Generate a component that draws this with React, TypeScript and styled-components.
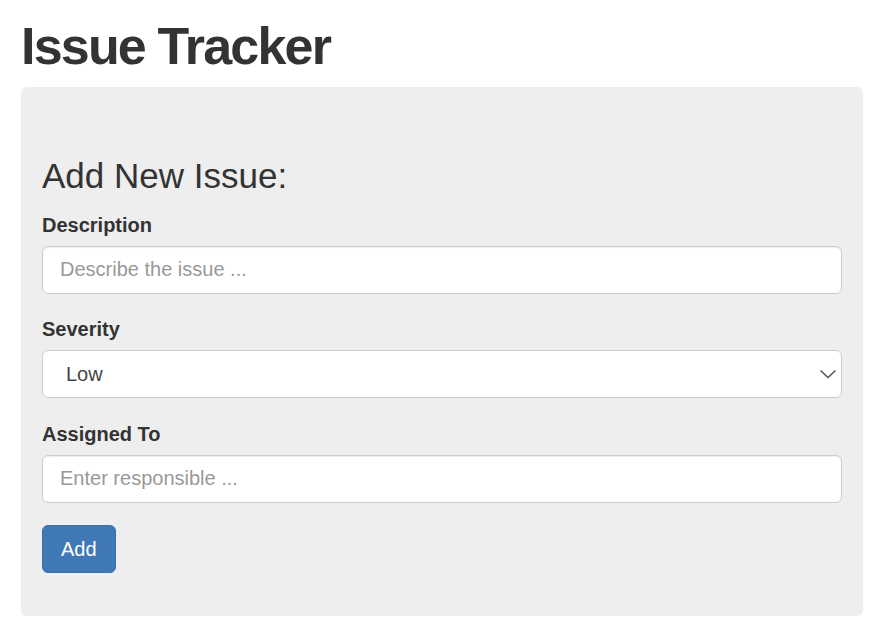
import { useState } from 'react';
import styled, { createGlobalStyle } from 'styled-components';

const GlobalStyle = createGlobalStyle`
  html, body {
    margin: 0;
    padding: 0;
    background: #ffffff;
  }

  body {
    font-family: 'Liberation Sans', Arial, Helvetica, sans-serif;
    color: #333333;
  }

  * {
    box-sizing: border-box;
  }
`;

const severities = ['Low', 'Medium', 'High'];

export default function App() {
  const [description, setDescription] = useState('');
  const [severity, setSeverity] = useState('Low');
  const [assignedTo, setAssignedTo] = useState('');

  return (
    <>
      <GlobalStyle />
      <Container>
        <PageTitle>Issue Tracker</PageTitle>
        <Well>
          <FormTitle>Add New Issue:</FormTitle>
          <IssueForm onSubmit={(e) => e.preventDefault()}>
            <FormGroup>
              <Label htmlFor="issueDescInput">Description</Label>
              <TextInput
                id="issueDescInput"
                type="text"
                placeholder="Describe the issue ..."
                value={description}
                onChange={(e) => setDescription(e.target.value)}
              />
            </FormGroup>
            <FormGroup>
              <Label htmlFor="issueSeverityInput">Severity</Label>
              <SelectWrapper>
                <Select
                  id="issueSeverityInput"
                  value={severity}
                  onChange={(e) => setSeverity(e.target.value)}
                >
                  {severities.map((s) => (
                    <option key={s} value={s}>
                      {s}
                    </option>
                  ))}
                </Select>
                <Chevron width="16" height="9" viewBox="0 0 16 9">
                  <path
                    d="M1 1 L8 7.5 L15 1"
                    fill="none"
                    stroke="#555"
                    strokeWidth="1.6"
                    strokeLinecap="round"
                    strokeLinejoin="round"
                  />
                </Chevron>
              </SelectWrapper>
            </FormGroup>
            <FormGroup>
              <Label htmlFor="issueAssignedToInput">Assigned To</Label>
              <TextInput
                id="issueAssignedToInput"
                type="text"
                placeholder="Enter responsible ..."
                value={assignedTo}
                onChange={(e) => setAssignedTo(e.target.value)}
              />
            </FormGroup>
            <PrimaryButton type="submit">Add</PrimaryButton>
          </IssueForm>
        </Well>
      </Container>
    </>
  );
}

const Container = styled.div`
  padding: 0 19px 0 21px;
`;

const PageTitle = styled.h1`
  margin: 18px 0 12px;
  font-size: 52px;
  font-weight: 700;
  line-height: 1.1;
  letter-spacing: -1.8px;
  color: #333333;
`;

const Well = styled.div`
  padding: 21px;
  background: #eeeeee;
  border-radius: 6px;
`;

const FormTitle = styled.h3`
  margin: 49px 0 15px;
  font-size: 35px;
  font-weight: 400;
  line-height: 1.1;
  color: #333333;
`;

const IssueForm = styled.form`
  display: flex;
  flex-direction: column;
  align-items: flex-start;
  margin-bottom: 22px;
`;

const FormGroup = styled.div`
  display: flex;
  flex-direction: column;
  align-self: stretch;
  margin-bottom: 21.5px;

  &:last-of-type {
    margin-bottom: 22.5px;
  }
`;

const Label = styled.label`
  margin-bottom: 7px;
  font-size: 20px;
  font-weight: 700;
  line-height: 28px;
  color: #333333;
`;

const TextInput = styled.input`
  width: 100%;
  height: 48px;
  padding: 0 17px;
  font-family: inherit;
  font-size: 20px;
  color: #555555;
  background: #ffffff;
  border: 1px solid #cccccc;
  border-radius: 6px;
  box-shadow: inset 0 1px 1px rgba(0, 0, 0, 0.075);
  outline: none;

  &::placeholder {
    color: #999999;
  }
`;

const SelectWrapper = styled.div`
  position: relative;
`;

const Select = styled.select`
  width: 100%;
  height: 48px;
  padding: 0 40px 0 23px;
  font-family: inherit;
  font-size: 20px;
  color: #444444;
  background: #ffffff;
  border: 1px solid #cccccc;
  border-radius: 6px;
  appearance: none;
  outline: none;
`;

const Chevron = styled.svg`
  position: absolute;
  top: 20px;
  right: 6px;
  pointer-events: none;
`;

const PrimaryButton = styled.button`
  height: 48px;
  padding: 0 18px;
  font-family: inherit;
  font-size: 20px;
  color: #ffffff;
  background: #3f78b5;
  border: 1px solid #3a70aa;
  border-radius: 6px;
  cursor: pointer;
`;
